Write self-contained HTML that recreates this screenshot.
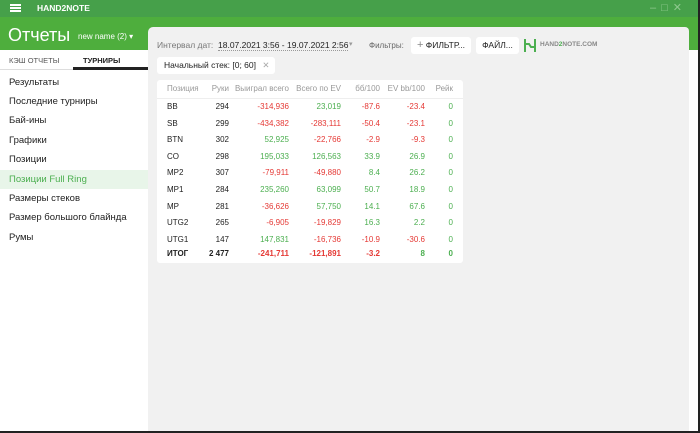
<!DOCTYPE html>
<html><head><meta charset="utf-8"><style>
*{margin:0;padding:0;box-sizing:border-box}
body{width:700px;height:433px;overflow:hidden;background:#fff;font-family:"Liberation Sans",sans-serif;position:relative;font-size:9px;color:#222}
.top{position:absolute;left:0;top:0;width:700px;height:17px;background:#46a04a}
.hdr{position:absolute;left:0;top:17px;width:700px;height:33px;background:#4eae3d}
.abs{position:absolute;white-space:nowrap}
.tabs{position:absolute;left:0;top:50px;width:148px;height:20px;border-bottom:1px solid #ddd}
.menu div{position:absolute;left:0;width:148px;height:19px;padding-left:9px;line-height:19px;font-size:9.5px;color:#222}
.panel{position:absolute;left:148px;top:27px;width:541px;height:406px;background:#f1f1f1;border-top-left-radius:5px;border-top-right-radius:4px}
.btn{position:absolute;background:#fff;border-radius:3px;height:17px;line-height:17px;font-size:8.5px;color:#222;text-align:center}
.card{position:absolute;left:157px;top:80px;width:306px;height:183px;background:#fff;border-radius:3px}
.r{position:absolute;text-align:right;font-size:8px}
</style></head><body>
<div class="top"></div>
<div class="hdr"></div>
<div class="abs" style="left:10px;top:4px;width:11px;height:2px;background:#fff;box-shadow:0 3px 0 #fff,0 6px 0 #fff"></div>
<div class="abs" style="left:37px;top:3px;color:#fff;font-size:8.5px;font-weight:bold">HAND2NOTE</div>
<div class="abs" style="left:650px;top:1px;color:#8fc98f;font-size:11px;letter-spacing:5px">–□✕</div>
<div class="abs" style="left:8px;top:25px;color:#fff;font-size:18px">Отчеты</div>
<div class="abs" style="left:78px;top:32px;color:#fff;font-size:8px">new name (2) ▾</div>
<div class="tabs"></div>
<div class="abs" style="left:9px;top:56px;font-size:7.5px;color:#555">КЭШ ОТЧЕТЫ</div>
<div class="abs" style="left:83px;top:56px;font-size:7.5px;font-weight:bold;color:#222">ТУРНИРЫ</div>
<div class="abs" style="left:73px;top:67px;width:75px;height:3px;background:#222"></div>
<div class="menu">
<div style="top:73px">Результаты</div>
<div style="top:92px">Последние турниры</div>
<div style="top:111px">Бай-ины</div>
<div style="top:131px">Графики</div>
<div style="top:150px">Позиции</div>
<div style="top:170px;background:#e8f5e9;color:#4caf50">Позиции Full Ring</div>
<div style="top:189px">Размеры стеков</div>
<div style="top:208px">Размер большого блайнда</div>
<div style="top:228px">Румы</div>
</div>
<div class="panel"></div>
<div class="abs" style="left:157px;top:40px;font-size:8.5px;color:#777">Интервал дат:</div>
<div class="abs" style="left:218px;top:40px;font-size:8.5px;color:#222;border-bottom:1px dotted #999">18.07.2021 3:56 - 19.07.2021 2:56</div>
<div class="abs" style="left:349px;top:40px;font-size:7px;color:#999">▾</div>
<div class="abs" style="left:369px;top:41px;font-size:8px;color:#666">Фильтры:</div>
<div class="btn" style="left:411px;top:37px;width:60px"><span style="color:#888;font-size:11px">+</span> ФИЛЬТР...</div>
<div class="btn" style="left:476px;top:37px;width:43px">ФАЙЛ...</div>
<svg class="abs" style="left:523px;top:38px" width="14" height="15"><path d="M2 1v13M12 1v13M2 6h4l2 3h4" stroke="#4caf50" stroke-width="2" fill="none"/></svg>
<div class="abs" style="left:540px;top:41px;font-size:6.5px;font-weight:bold;color:#888">HAND<span style="color:#4caf50">2</span>NOTE.COM</div>
<div class="btn" style="left:157px;top:57px;width:118px;text-align:left;padding-left:7px">Начальный стек: [0; 60] <span style="color:#aaa;margin-left:4px">✕</span></div>
<div class="card"></div>
<div class="abs" style="left:157px;top:98px;width:306px;height:1px;background:#eee"></div>
<div id="t"></div>
<script>
const rows=[["Позиция","Руки","Выиграл всего","Всего по EV","бб/100","EV bb/100","Рейк"],
["BB","294","-314,936","23,019","-87.6","-23.4","0"],
["SB","299","-434,382","-283,111","-50.4","-23.1","0"],
["BTN","302","52,925","-22,766","-2.9","-9.3","0"],
["CO","298","195,033","126,563","33.9","26.9","0"],
["MP2","307","-79,911","-49,880","8.4","26.2","0"],
["MP1","284","235,260","63,099","50.7","18.9","0"],
["MP","281","-36,626","57,750","14.1","67.6","0"],
["UTG2","265","-6,905","-19,829","16.3","2.2","0"],
["UTG1","147","147,831","-16,736","-10.9","-30.6","0"],
["ИТОГ","2 477","-241,711","-121,891","-3.2","8","0"]];
const rights=[229,289,341,380,425,453];let h="";
rows.forEach((r,i)=>{const y=i==0?84:(i==10?249:102+(i-1)*16.6);
const hd=i==0,b=i==10;
h+=`<div class="abs" style="left:167px;top:${y}px;font-size:8px;color:${hd?'#999':'#222'};${b?'font-weight:bold':''}">${r[0]}</div>`;
for(let c=1;c<7;c++){let cl=hd?'color:#999':(c==1?'color:#222':(r[c].startsWith('-')?'color:#e53935':'color:#4caf50'));
h+=`<div class="r" style="left:${rights[c-1]-70}px;width:70px;top:${y}px;${cl};${b?'font-weight:bold':''}">${r[c]}</div>`;}});
document.getElementById('t').innerHTML=h;
</script>
<div class="abs" style="left:698px;top:0;width:2px;height:433px;background:#222"></div>
<div class="abs" style="left:0;top:431px;width:700px;height:2px;background:#222"></div>
</body></html>
